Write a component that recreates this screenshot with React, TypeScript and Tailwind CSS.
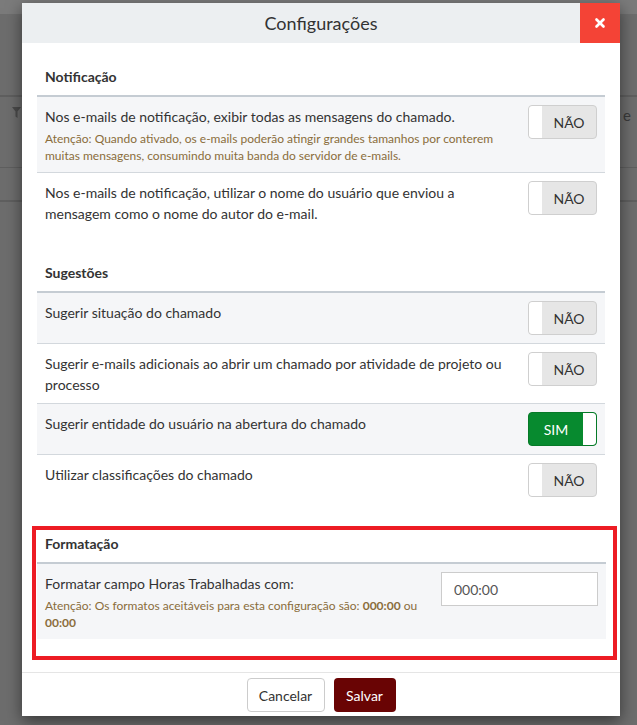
import { X } from "lucide-react";

type Row = { label: string; note?: string; on?: boolean };

const notificacao: Row[] = [
  {
    label: "Nos e-mails de notificação, exibir todas as mensagens do chamado.",
    note: "Atenção: Quando ativado, os e-mails poderão atingir grandes tamanhos por conterem muitas mensagens, consumindo muita banda do servidor de e-mails.",
  },
  { label: "Nos e-mails de notificação, utilizar o nome do usuário que enviou a mensagem como o nome do autor do e-mail." },
];

const sugestoes: Row[] = [
  { label: "Sugerir situação do chamado" },
  { label: "Sugerir e-mails adicionais ao abrir um chamado por atividade de projeto ou processo" },
  { label: "Sugerir entidade do usuário na abertura do chamado", on: true },
  { label: "Utilizar classificações do chamado" },
];

function Toggle({ on }: { on?: boolean }) {
  if (on) {
    return (
      <div className="flex h-[34px] w-[69px] shrink-0 overflow-hidden rounded-[4px] border border-[#067a28] bg-[#078a2f]">
        <span className="flex flex-1 items-center justify-center text-[14px] text-white">SIM</span>
        <span className="w-[13px] rounded-r-[3px] bg-white" />
      </div>
    );
  }
  return (
    <div className="flex h-[34px] w-[69px] shrink-0 overflow-hidden rounded-[4px] border border-[#cfcfcf] bg-[#e6e6e6]">
      <span className="w-[13px] rounded-l-[3px] bg-white" />
      <span className="flex flex-1 items-center justify-center text-[14px] text-[#333]">NÃO</span>
    </div>
  );
}

function Heading({ children }: { children: React.ReactNode }) {
  return (
    <h3 className="border-b-2 border-[#c5ccd3] px-2 pb-2 text-[14px] font-bold leading-[20px] text-[#333]">
      {children}
    </h3>
  );
}

function Section({ title, rows, className }: { title: string; rows: Row[]; className?: string }) {
  return (
    <section className={className}>
      <Heading>{title}</Heading>
      {rows.map((r, i) => (
        <div
          key={r.label}
          className={
            "flex items-start gap-6 px-2 py-2 " +
            (i % 2 === 0 ? "bg-[#f5f6f8] " : "bg-white ") +
            (i < rows.length - 1 ? "border-b border-[#d3d8dd]" : "")
          }
        >
          <div className="mt-px flex-1">
            <p className="text-[14px] leading-[21px] text-[#333]">{r.label}</p>
            {r.note && <p className="mt-[3px] text-[12px] leading-[17px] text-[#8a6d3b]">{r.note}</p>}
          </div>
          <Toggle on={r.on} />
        </div>
      ))}
    </section>
  );
}

export default function App() {
  return (
    <div className="relative h-[725px] w-[637px] overflow-hidden bg-[#6d6d6d] font-['Lato','Segoe_UI',sans-serif]">
      {/* page behind the backdrop */}
      <div className="flex flex-col">
        <div className="h-[14px] bg-[#7b7b7b]" />
        <div className="h-[81px]" />
        <div className="h-[2px] bg-[#5f5f5f]" />
        <div className="flex h-[70px] items-start justify-between pl-3 pr-[6px] pt-[10px]">
          <svg width="9" height="11" viewBox="0 0 9 11">
            <path d="M0 0h9L5.5 4.5V11L3.5 9.5V4.5z" fill="#4a4a4a" />
          </svg>
          <span className="mt-[-2px] text-[15px] leading-[20px] text-[#3a3a3a]">e</span>
        </div>
        <div className="h-px bg-[#5f5f5f]" />
        <div className="h-[32px]" />
        <div className="h-[2px] bg-[#5f5f5f]" />
      </div>

      {/* modal */}
      <div className="absolute left-[22px] top-[3px] w-[598px] bg-white shadow-[0_5px_15px_rgba(0,0,0,0.5)]">
        <div className="flex h-10 items-center bg-[#eceff1]">
          <h2 className="flex-1 pl-10 text-center text-[18px] text-[#333]">Configurações</h2>
          <button type="button" className="flex h-10 w-10 items-center justify-center bg-[#f44336] text-white">
            <X className="h-[14px] w-[14px]" strokeWidth={4.5} />
          </button>
        </div>

        <div className="px-[15px] pb-3 pt-6">
          <Section title="Notificação" rows={notificacao} />
          <Section title="Sugestões" rows={sugestoes} className="mt-[31px]" />

          <div className="ml-[-5px] mr-[-12px] mt-[21px] border-4 border-[#ed1c24] pb-[17px] pl-px pr-[7px] pt-1">
            <Heading>Formatação</Heading>
            <div className="flex items-start gap-4 bg-[#f5f6f8] px-2 py-2">
              <div className="mt-px flex-1">
                <p className="text-[14px] leading-[21px] text-[#333]">Formatar campo Horas Trabalhadas com:</p>
                <p className="mt-[3px] text-[12px] leading-[17px] text-[#8a6d3b]">
                  Atenção: Os formatos aceitáveis para esta configuração são: <b>000:00</b> ou <b>00:00</b>
                </p>
              </div>
              <input
                readOnly
                value="000:00"
                className="h-[34px] w-[157px] border border-[#ccc] bg-white px-3 text-[14px] text-[#555] outline-none"
              />
            </div>
          </div>
        </div>

        <div className="flex justify-center gap-[9px] border-t border-[#e5e5e5] pb-1 pt-[5px]">
          <button
            type="button"
            className="h-[34px] w-[78px] rounded-[4px] border border-[#ccc] bg-white text-[14px] text-[#333]"
          >
            Cancelar
          </button>
          <button type="button" className="h-[34px] w-[62px] rounded-[4px] bg-[#690404] text-[14px] text-white">
            Salvar
          </button>
        </div>
      </div>
    </div>
  );
}
